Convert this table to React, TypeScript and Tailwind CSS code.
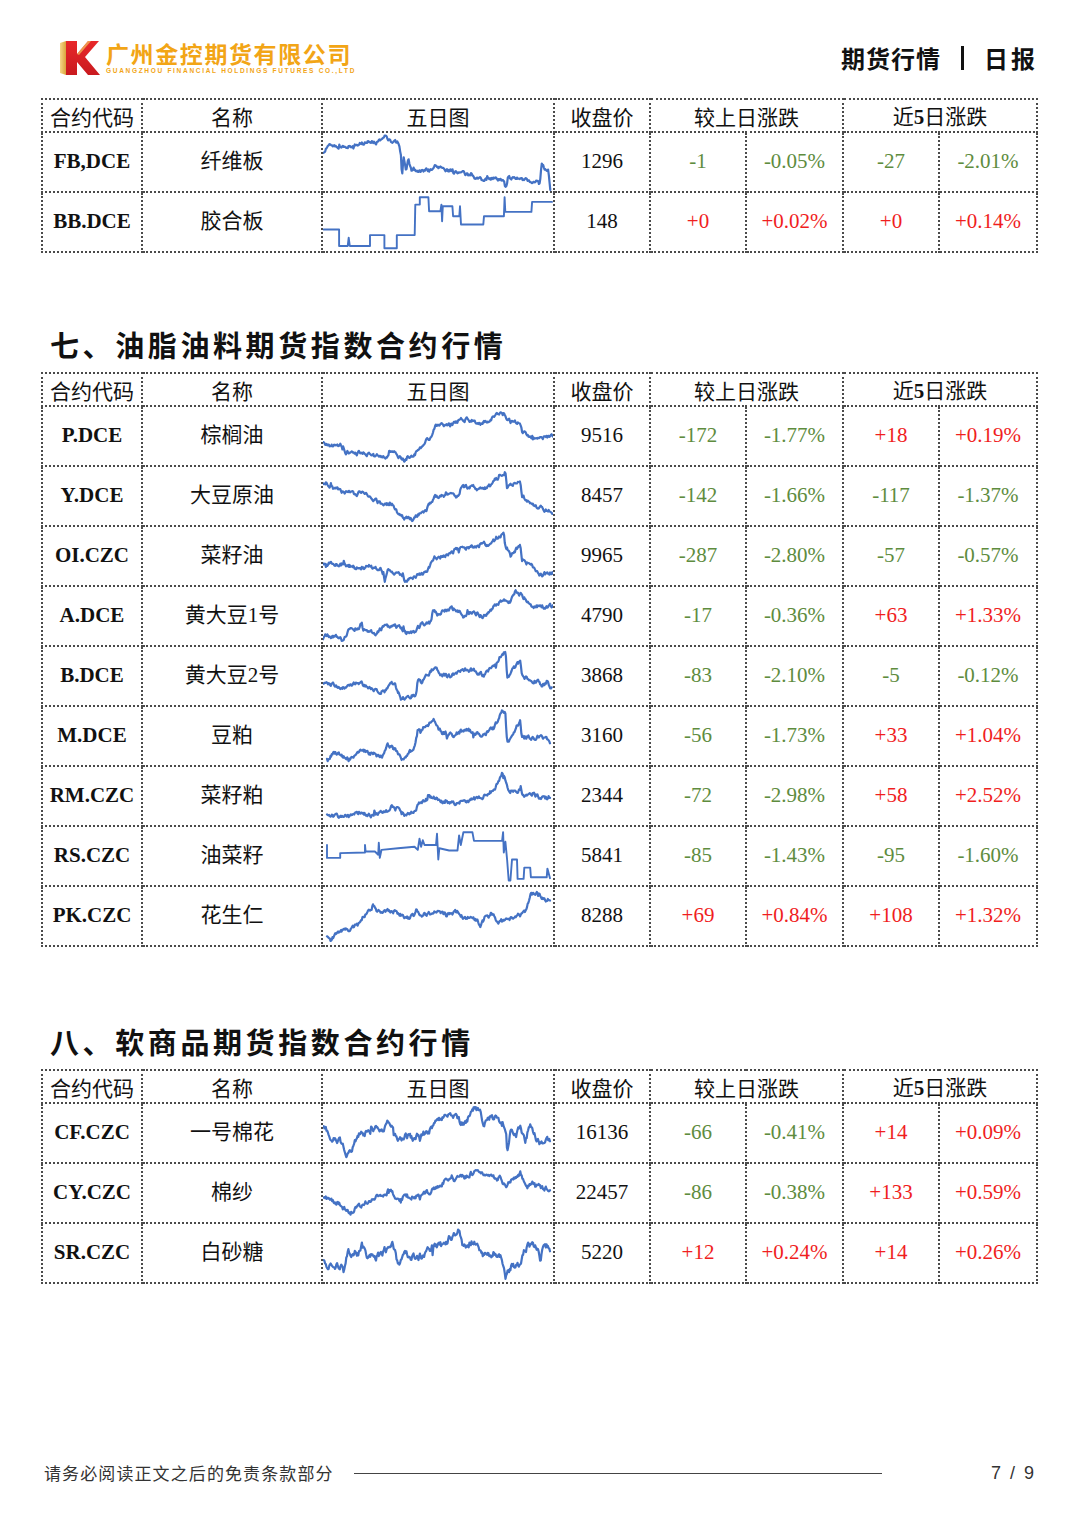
import React from "react";

type Chart = { xr: [number, number]; yr: [number, number]; pts: number[]; step?: boolean; seed: number; amp?: number };

const W = 230;
const H = 58;

function mulberry(seed: number) {
  let a = seed >>> 0;
  return () => {
    a = (a + 0x6d2b79f5) >>> 0;
    let t = a;
    t = Math.imul(t ^ (t >>> 15), t | 1);
    t ^= t + Math.imul(t ^ (t >>> 7), t | 61);
    return ((t ^ (t >>> 14)) >>> 0) / 4294967296;
  };
}

function buildPath(c: Chart): string {
  const kp: [number, number][] = [];
  for (let i = 0; i < c.pts.length; i += 2) {
    const fx = (c.pts[i] - c.xr[0]) / (c.xr[1] - c.xr[0]);
    const fy = (c.pts[i + 1] - c.yr[0]) / (c.yr[1] - c.yr[0]);
    kp.push([Math.max(0, Math.min(1, fx)), Math.max(0, Math.min(1, fy))]);
  }
  if (c.step) {
    return kp.map((p, i) => `${i === 0 ? "M" : "L"}${(p[0] * W).toFixed(1)},${(p[1] * H).toFixed(1)}`).join(" ");
  }
  const rnd = mulberry(c.seed);
  const N = 320;
  const x0 = kp[0][0];
  const x1 = kp[kp.length - 1][0];
  let n = 0;
  const amp = c.amp ?? 0.06;
  const out: string[] = [];
  let seg = 0;
  for (let i = 0; i <= N; i++) {
    const x = x0 + ((x1 - x0) * i) / N;
    while (seg < kp.length - 2 && x > kp[seg + 1][0]) seg++;
    const a = kp[seg];
    const b = kp[seg + 1];
    const t = b[0] === a[0] ? 1 : (x - a[0]) / (b[0] - a[0]);
    const base = a[1] + (b[1] - a[1]) * Math.max(0, Math.min(1, t));
    n = n * 0.55 + (rnd() - 0.5) * amp;
    if (rnd() < 0.03) n += (rnd() - 0.5) * amp * 2.5;
    const y = Math.max(0.02, Math.min(0.98, base + n));
    out.push(`${i === 0 ? "M" : "L"}${(x * W).toFixed(1)},${(y * H).toFixed(1)}`);
  }
  return out.join(" ");
}

const Z8: [number, number] = [3, 699];

const charts: Record<string, Chart> = {
  FB: {
    xr: [833, 1503], yr: [125, 300], seed: 11, amp: 0.05,
    pts: [835,185,850,160,890,170,930,160,970,150,985,155,1015,140,1030,150,1055,155,1060,190,1063,260,1068,200,1075,245,1082,205,1090,235,1100,240,1150,235,1160,225,1200,240,1240,245,1260,255,1290,265,1340,262,1360,268,1365,290,1372,262,1420,265,1445,275,1465,270,1470,220,1480,235,1490,240,1495,295],
  },
  BB: {
    xr: [833, 1503], yr: [305, 480], seed: 12, step: true,
    pts: [835,415,880,415,880,465,905,465,908,440,911,465,970,465,970,432,1012,432,1012,472,1048,472,1048,432,1100,432,1102,340,1115,340,1115,318,1140,318,1142,360,1175,360,1178,340,1180,390,1182,345,1210,345,1212,375,1230,375,1232,345,1235,400,1300,400,1302,375,1360,375,1362,318,1364,362,1440,362,1442,332,1500,332],
  },
  P: {
    xr: Z8, yr: [18, 198], seed: 21,
    pts: [0,128,20,140,55,135,65,158,100,162,140,165,150,172,175,168,195,175,205,150,220,152,230,170,250,185,275,175,290,150,310,128,330,115,345,75,380,75,400,70,420,55,460,60,470,75,500,60,520,50,530,38,550,40,560,60,600,68,605,90,620,108,660,112,699,110],
  },
  Y: {
    xr: Z8, yr: [198, 378], seed: 22,
    pts: [0,250,30,265,60,275,90,280,130,280,150,295,190,318,210,310,230,340,250,360,275,362,290,345,310,340,340,290,380,285,410,290,420,262,460,260,470,270,500,265,520,245,540,220,555,215,560,260,600,240,605,290,630,310,660,325,699,340],
  },
  OI: {
    xr: Z8, yr: [378, 558], seed: 23,
    pts: [0,495,30,490,60,495,90,505,140,500,180,510,190,545,200,515,240,530,250,545,280,535,320,515,340,475,380,465,420,440,460,440,500,430,540,410,550,395,555,440,575,460,600,435,605,485,640,500,660,525,699,520],
  },
  A: {
    xr: Z8, yr: [6, 186], seed: 24,
    pts: [0,170,10,155,50,160,60,170,80,140,110,135,120,115,125,140,165,148,175,135,210,125,240,135,250,150,280,148,300,120,330,118,335,75,350,95,380,75,410,75,425,90,460,80,485,100,510,80,540,50,570,55,585,22,605,30,630,65,660,65,699,65],
  },
  B: {
    xr: Z8, yr: [186, 369], seed: 25,
    pts: [0,300,40,305,60,318,110,300,140,310,190,330,205,295,220,305,240,350,270,340,285,335,290,285,300,295,340,250,360,275,390,280,420,255,460,260,490,275,520,245,545,205,555,205,560,290,575,260,600,230,605,280,630,290,655,295,665,310,680,295,695,315],
  },
  M: {
    xr: Z8, yr: [369, 549], seed: 26,
    pts: [15,530,40,510,60,520,80,530,120,500,150,515,175,520,200,485,220,500,240,530,280,498,290,440,340,410,360,450,400,455,430,440,480,455,520,435,545,385,555,390,560,480,600,410,605,460,640,465,665,455,690,480],
  },
  RM: {
    xr: Z8, yr: [9, 189], seed: 27,
    pts: [15,170,40,160,80,165,120,150,150,160,170,150,200,145,210,128,225,132,245,160,270,150,285,150,290,120,340,100,370,120,410,125,430,115,480,105,520,80,545,30,550,25,565,85,600,80,610,100,640,90,660,105,690,105],
  },
  RS: {
    xr: Z8, yr: [189, 369], seed: 28, step: true,
    pts: [15,245,15,285,55,285,55,270,130,268,130,245,132,265,160,265,170,275,172,238,175,285,180,260,230,255,280,250,290,260,295,225,300,250,305,230,310,245,345,245,348,210,352,290,355,255,385,262,410,262,415,215,420,245,428,205,455,205,460,232,545,232,548,205,550,268,555,235,560,290,565,355,570,355,575,290,590,290,592,350,610,350,612,315,630,315,632,345,680,345,682,318,690,348],
  },
  PK: {
    xr: Z8, yr: [369, 549], seed: 29,
    pts: [15,525,25,535,50,510,80,500,110,485,125,460,150,435,155,425,170,445,200,440,230,450,260,465,280,455,285,440,300,455,340,448,380,455,410,445,430,465,470,470,480,490,495,460,520,455,530,480,570,465,600,455,620,440,630,390,650,390,665,405,690,410],
  },
  CF: {
    xr: Z8, yr: [9, 189], seed: 31, amp: 0.09,
    pts: [5,75,25,110,45,120,60,130,75,165,90,160,100,125,110,105,150,95,165,80,180,100,200,65,210,75,230,125,250,110,280,115,300,105,310,100,330,90,345,55,360,60,375,35,390,50,410,55,420,75,440,55,460,25,480,35,490,70,510,50,545,60,555,80,560,155,570,95,590,100,600,75,615,120,630,75,645,110,660,125,670,130,680,110,690,120],
  },
  CY: {
    xr: Z8, yr: [189, 369], seed: 32, amp: 0.07,
    pts: [5,295,40,305,60,320,85,345,100,330,140,305,175,290,195,285,205,265,230,300,250,290,300,290,340,265,360,260,375,235,390,240,440,225,470,205,490,230,540,235,555,260,600,215,620,260,640,245,665,265,690,265],
  },
  SR: {
    xr: Z8, yr: [369, 549], seed: 33, amp: 0.1,
    pts: [5,480,20,500,60,495,65,515,75,455,110,460,120,435,140,470,170,470,200,440,215,430,230,495,250,460,280,475,300,470,330,440,360,435,380,420,410,390,415,385,425,435,460,425,480,460,500,470,520,460,545,470,555,530,575,495,600,500,610,455,625,435,650,440,660,480,675,430,690,445],
  },
};

function Spark({ id }: { id: string }) {
  const c = charts[id];
  const d = React.useMemo(() => buildPath(c), [c]);
  return (
    <svg viewBox={`0 0 ${W} ${H}`} preserveAspectRatio="none" className="block w-full h-[58px]">
      <path d={d} fill="none" stroke="#4472c4" strokeWidth={c.step ? 1.9 : 2.2} strokeLinejoin="round" strokeLinecap="round" />
    </svg>
  );
}

type Row = { code: string; name: string; chart: string; close: string; d1: string; p1: string; d5: string; p5: string };

const t1: Row[] = [
  { code: "FB,DCE", name: "纤维板", chart: "FB", close: "1296", d1: "-1", p1: "-0.05%", d5: "-27", p5: "-2.01%" },
  { code: "BB.DCE", name: "胶合板", chart: "BB", close: "148", d1: "+0", p1: "+0.02%", d5: "+0", p5: "+0.14%" },
];

const t2: Row[] = [
  { code: "P.DCE", name: "棕榈油", chart: "P", close: "9516", d1: "-172", p1: "-1.77%", d5: "+18", p5: "+0.19%" },
  { code: "Y.DCE", name: "大豆原油", chart: "Y", close: "8457", d1: "-142", p1: "-1.66%", d5: "-117", p5: "-1.37%" },
  { code: "OI.CZC", name: "菜籽油", chart: "OI", close: "9965", d1: "-287", p1: "-2.80%", d5: "-57", p5: "-0.57%" },
  { code: "A.DCE", name: "黄大豆1号", chart: "A", close: "4790", d1: "-17", p1: "-0.36%", d5: "+63", p5: "+1.33%" },
  { code: "B.DCE", name: "黄大豆2号", chart: "B", close: "3868", d1: "-83", p1: "-2.10%", d5: "-5", p5: "-0.12%" },
  { code: "M.DCE", name: "豆粕", chart: "M", close: "3160", d1: "-56", p1: "-1.73%", d5: "+33", p5: "+1.04%" },
  { code: "RM.CZC", name: "菜籽粕", chart: "RM", close: "2344", d1: "-72", p1: "-2.98%", d5: "+58", p5: "+2.52%" },
  { code: "RS.CZC", name: "油菜籽", chart: "RS", close: "5841", d1: "-85", p1: "-1.43%", d5: "-95", p5: "-1.60%" },
  { code: "PK.CZC", name: "花生仁", chart: "PK", close: "8288", d1: "+69", p1: "+0.84%", d5: "+108", p5: "+1.32%" },
];

const t3: Row[] = [
  { code: "CF.CZC", name: "一号棉花", chart: "CF", close: "16136", d1: "-66", p1: "-0.41%", d5: "+14", p5: "+0.09%" },
  { code: "CY.CZC", name: "棉纱", chart: "CY", close: "22457", d1: "-86", p1: "-0.38%", d5: "+133", p5: "+0.59%" },
  { code: "SR.CZC", name: "白砂糖", chart: "SR", close: "5220", d1: "+12", p1: "+0.24%", d5: "+14", p5: "+0.26%" },
];

const cell = "border-2 border-dotted border-[#4a4a4a] p-0 text-center align-middle";

function Val({ v }: { v: string }) {
  return <span className={v.startsWith("-") ? "text-[#5e8c3e]" : "text-[#f01e1e]"}>{v}</span>;
}

function DataTable({ rows }: { rows: Row[] }) {
  return (
    <table className="table-fixed w-[995px] border-collapse font-['Liberation_Serif','Noto_Sans_CJK_SC',serif] text-[21px] text-[#111111]">
      <colgroup>
        <col className="w-[100px]" />
        <col className="w-[180px]" />
        <col className="w-[232px]" />
        <col className="w-[96px]" />
        <col className="w-[96px]" />
        <col className="w-[97px]" />
        <col className="w-[96px]" />
        <col className="w-[98px]" />
      </colgroup>
      <thead>
        <tr className="h-[33px] leading-[28px]">
          <th className={`${cell} font-normal font-['Noto_Sans_CJK_SC',sans-serif] text-[21px] whitespace-nowrap`}>合约代码</th>
          <th className={`${cell} font-normal font-['Noto_Sans_CJK_SC',sans-serif]`}>名称</th>
          <th className={`${cell} font-normal font-['Noto_Sans_CJK_SC',sans-serif]`}>五日图</th>
          <th className={`${cell} font-normal font-['Noto_Sans_CJK_SC',sans-serif]`}>收盘价</th>
          <th colSpan={2} className={`${cell} font-normal font-['Noto_Sans_CJK_SC',sans-serif]`}>较上日涨跌</th>
          <th colSpan={2} className={`${cell} font-normal`}>
            <span className="font-['Noto_Sans_CJK_SC',sans-serif]">近</span>
            <span className="font-bold font-['Liberation_Serif',serif]">5</span>
            <span className="font-['Noto_Sans_CJK_SC',sans-serif]">日涨跌</span>
          </th>
        </tr>
      </thead>
      <tbody>
        {rows.map((r) => (
          <tr key={r.code} className="h-[60px]">
            <td className={`${cell} font-bold whitespace-nowrap`}>{r.code}</td>
            <td className={cell}>{r.name}</td>
            <td className={`${cell} align-middle`}>
              <Spark id={r.chart} />
            </td>
            <td className={cell}>{r.close}</td>
            <td className={cell}><Val v={r.d1} /></td>
            <td className={cell}><Val v={r.p1} /></td>
            <td className={cell}><Val v={r.d5} /></td>
            <td className={cell}><Val v={r.p5} /></td>
          </tr>
        ))}
      </tbody>
    </table>
  );
}

function Logo() {
  return (
    <div className="flex items-center gap-[6px]">
      <svg width="40" height="34" viewBox="0 0 40 34">
        <defs>
          <linearGradient id="kg" x1="0" y1="0" x2="1" y2="0">
            <stop offset="0" stopColor="#f6d78a" />
            <stop offset="1" stopColor="#d9a53a" />
          </linearGradient>
          <linearGradient id="kr" x1="0" y1="0" x2="0" y2="1">
            <stop offset="0" stopColor="#e8282a" />
            <stop offset="1" stopColor="#c91a1f" />
          </linearGradient>
        </defs>
        <polygon points="0,2 6,0 6,34 0,32" fill="url(#kg)" />
        <polygon points="6,0 17,0 17,13 28,0 39,0 25,16 40,34 28,34 17,21 17,34 6,34" fill="url(#kr)" />
        <polygon points="28,0 31,0 19,14 17,13" fill="#f3c45c" opacity="0.7" />
      </svg>
      <div className="flex flex-col w-[249px]">
        <div className="text-[23px] leading-[24px] font-bold text-[#f2a516] tracking-[1.6px] font-['Noto_Sans_CJK_SC',sans-serif] whitespace-nowrap">
          广州金控期货有限公司
        </div>
        <div className="mt-[2px] text-[6.5px] leading-[8px] font-bold text-[#f2a516] tracking-[1.7px] font-['Liberation_Sans',sans-serif] whitespace-nowrap">
          GUANGZHOU FINANCIAL HOLDINGS FUTURES CO.,LTD
        </div>
      </div>
    </div>
  );
}

function Heading({ children, mt }: { children: React.ReactNode; mt: string }) {
  return (
    <h2 className={`${mt} mb-[8px] h-[40px] leading-[40px] pl-[9px] text-[29px] font-bold tracking-[3.6px] text-[#111111] font-['Noto_Sans_CJK_SC',sans-serif] whitespace-nowrap`}>
      {children}
    </h2>
  );
}

export default function App() {
  return (
    <div className="w-[1080px] min-h-[1527px] bg-white">
      <header className="h-[98px] pt-[18px] pl-[60px] pr-[42px] flex items-center justify-between">
        <Logo />
        <div className="flex items-center text-[24px] font-bold text-[#111111] font-['Noto_Sans_CJK_SC',sans-serif] tracking-[1px]">
          <span>期货行情</span>
          <span className="mx-[20px] inline-block w-[3px] h-[24px] bg-[#111111]" />
          <span className="tracking-[3px]">日报</span>
        </div>
      </header>
      <main className="pl-[41px]">
        <DataTable rows={t1} />
        <Heading mt="mt-[71px]">七、油脂油料期货指数合约行情</Heading>
        <DataTable rows={t2} />
        <Heading mt="mt-[74px]">八、软商品期货指数合约行情</Heading>
        <DataTable rows={t3} />
      </main>
      <footer className="mt-[177px] h-[24px] pl-[44px] pr-[44px] flex items-center font-['Noto_Sans_CJK_SC',sans-serif] text-[#333333]">
        <span className="text-[17px] tracking-[1.1px] whitespace-nowrap">请务必阅读正文之后的免责条款部分</span>
        <span className="ml-[20px] w-[528px] h-[1px] bg-[#444444]" />
        <span className="ml-auto text-[18px] font-['Liberation_Sans_Narrow','Liberation_Sans',sans-serif] tracking-[2px]">7 / 9</span>
      </footer>
    </div>
  );
}
